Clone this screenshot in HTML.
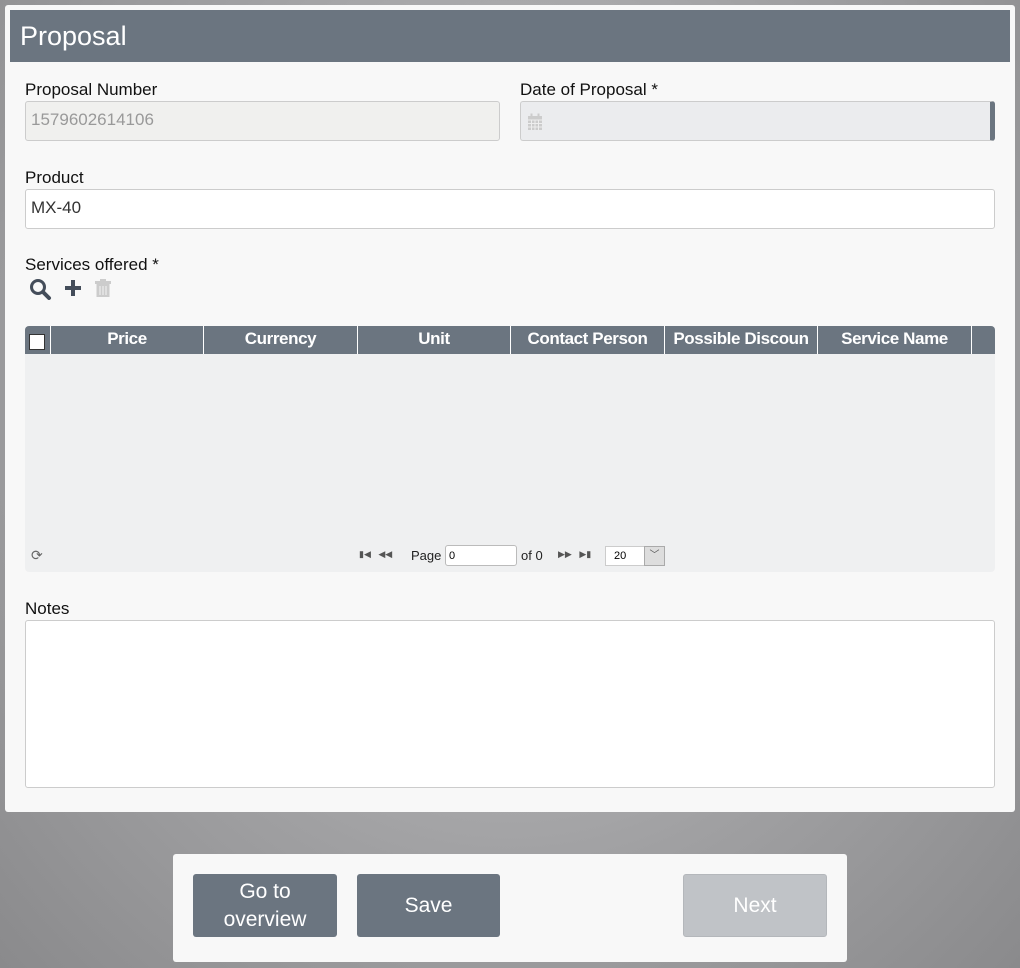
<!DOCTYPE html>
<html><head><meta charset="utf-8"><style>
*{box-sizing:border-box;margin:0;padding:0}
body{width:1020px;height:968px;overflow:hidden;font-family:"Liberation Sans",sans-serif;background:radial-gradient(ellipse at 50% 40%,#c8c8ca 0%,#a0a0a2 60%,#8a8a8c 100%);position:relative}
.panel{position:absolute;left:5px;top:5px;width:1010px;height:807px;background:#f8f8f8;border-radius:3px}
.hdr{position:absolute;left:10px;top:10px;width:1000px;height:52px;background:#6b7580;color:#fff;font-size:27px;padding:11px 0 0 10px;font-weight:300}
.lbl{position:absolute;font-size:17px;color:#111}
.inp{position:absolute;border:1px solid #ccc;border-radius:3px;background:#fff;font-size:17px;padding:8px 5px}
.th{position:absolute;top:326px;height:28px;color:#fff;font-weight:bold;font-size:17px;text-align:center;line-height:26px;border-right:1px solid #fff;letter-spacing:-0.4px;white-space:nowrap;overflow:hidden}
.btn{position:absolute;top:874px;height:63px;border-radius:3px;background:#6b7580;color:#fff;font-size:21px;text-align:center;display:flex;align-items:center;justify-content:center;line-height:28px}
.pg{position:absolute;font-size:13px;color:#222}
</style></head><body>
<div class="panel"></div>
<div class="hdr">Proposal</div>
<div class="lbl" style="left:25px;top:80px">Proposal Number</div>
<div class="inp" style="left:25px;top:101px;width:475px;height:40px;background:#f0f0ee;color:#999">1579602614106</div>
<div class="lbl" style="left:520px;top:80px">Date of Proposal *</div>
<div class="inp" style="left:520px;top:101px;width:475px;height:40px;background:#ebecee;border-right:5px solid #6b7580">
<svg width="16" height="18" viewBox="0 0 16 18" style="position:absolute;left:6px;top:11px"><rect x="1" y="3" width="14" height="14" fill="#ccc"/><g stroke="#eee" stroke-width="1"><path d="M1 7h14M1 10.5h14M1 14h14M4.5 7v10M8 7v10M11.5 7v10"/></g><rect x="3.5" y="0.5" width="2" height="4" fill="#ccc"/><rect x="10.5" y="0.5" width="2" height="4" fill="#ccc"/></svg></div>
<div class="lbl" style="left:25px;top:168px">Product</div>
<div class="inp" style="left:25px;top:189px;width:970px;height:40px;color:#333">MX-40</div>
<div class="lbl" style="left:25px;top:255px">Services offered *</div>
<svg style="position:absolute;left:29px;top:278px" width="24" height="22" viewBox="0 0 24 22"><circle cx="9" cy="9" r="6.5" fill="none" stroke="#444d5a" stroke-width="3"/><path d="M14 14l6 6" stroke="#444d5a" stroke-width="4" stroke-linecap="round"/></svg>
<svg style="position:absolute;left:64px;top:279px" width="18" height="18" viewBox="0 0 18 18"><path d="M9 1v16M1 9h16" stroke="#444d5a" stroke-width="4"/></svg>
<svg style="position:absolute;left:94px;top:279px" width="18" height="19" viewBox="0 0 18 19"><rect x="1" y="2" width="16" height="3" fill="#ccc"/><rect x="6" y="0" width="6" height="3" fill="#ccc"/><rect x="2.5" y="5" width="13" height="13" fill="#ccc"/><path d="M6 7v9M9 7v9M12 7v9" stroke="#eee" stroke-width="1.2"/></svg>
<div style="position:absolute;left:25px;top:326px;width:970px;height:246px;background:#eff0f1;border-radius:4px"></div>
<div style="position:absolute;left:25px;top:326px;width:970px;height:28px;background:#6b7580;border-radius:4px 4px 0 0"></div>
<div class="th" style="left:25px;width:26px"><div style="position:absolute;left:4px;top:8px;width:16px;height:16px;background:#fff;border:1px solid #333"></div></div>
<div class="th" style="left:51px;width:153px">Price</div>
<div class="th" style="left:204px;width:154px">Currency</div>
<div class="th" style="left:358px;width:153px">Unit</div>
<div class="th" style="left:511px;width:154px">Contact Person</div>
<div class="th" style="left:665px;width:153px">Possible Discoun</div>
<div class="th" style="left:818px;width:154px">Service Name</div>
<div class="pg" style="left:31px;top:547px;color:#666;font-size:14px">⟳</div>
<div class="pg" style="left:359px;top:549px;font-size:9px;color:#555">▮◀ &nbsp; ◀◀</div>
<div class="pg" style="left:411px;top:548px">Page</div>
<div style="position:absolute;left:445px;top:545px;width:72px;height:21px;background:#fff;border:1px solid #bbb;border-radius:3px;font-size:11px;padding:4px 3px">0</div>
<div class="pg" style="left:521px;top:548px">of 0</div>
<div class="pg" style="left:558px;top:549px;font-size:9px;color:#555">▶▶ &nbsp; ▶▮</div>
<div style="position:absolute;left:605px;top:546px;width:60px;height:20px;background:#fff;border:1px solid #ccc;font-size:11px;padding:3px 8px">20</div>
<div style="position:absolute;left:644px;top:546px;width:21px;height:20px;background:#ddd;border:1px solid #aaa;font-size:10px;text-align:center;color:#555;line-height:18px">﹀</div>
<div class="lbl" style="left:25px;top:599px">Notes</div>
<div class="inp" style="left:25px;top:620px;width:970px;height:168px"></div>
<div style="position:absolute;left:173px;top:854px;width:674px;height:108px;background:#f8f8f8;border-radius:3px"></div>
<div class="btn" style="left:193px;width:144px">Go to<br>overview</div>
<div class="btn" style="left:357px;width:143px">Save</div>
<div class="btn" style="left:683px;width:144px;background:#c0c3c7;border:1px solid #b4b7bb">Next</div>
</body></html>
